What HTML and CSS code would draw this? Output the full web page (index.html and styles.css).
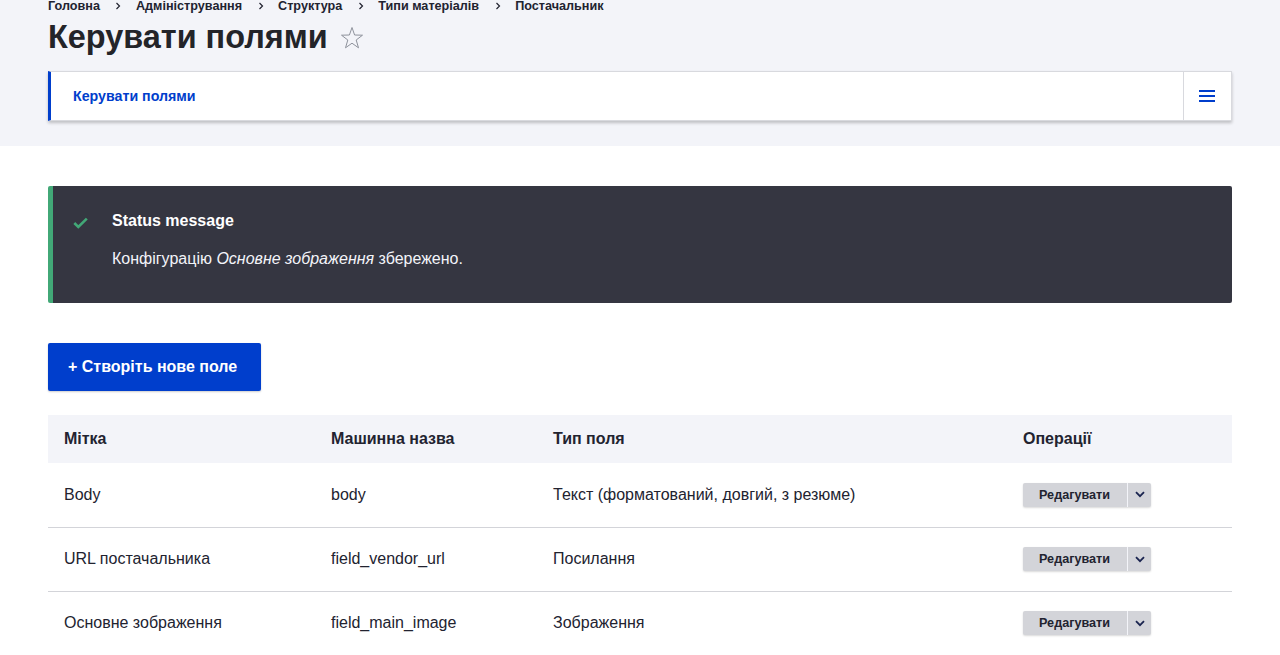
FILE: index.html
```html
<!DOCTYPE html>
<html lang="uk">
<head>
<meta charset="utf-8">
<title>Керувати полями</title>
<link rel="stylesheet" href="styles.css">
</head>
<body>
<header class="page-header">
  <nav class="breadcrumb">
    <a href="#">Головна</a><span class="sep"><svg width="6" height="8" viewBox="0 0 6 8"><path d="M1.5 1l3 3-3 3" fill="none" stroke="#222330" stroke-width="1.2"/></svg></span>
    <a href="#">Адміністрування</a><span class="sep"><svg width="6" height="8" viewBox="0 0 6 8"><path d="M1.5 1l3 3-3 3" fill="none" stroke="#222330" stroke-width="1.2"/></svg></span>
    <a href="#">Структура</a><span class="sep"><svg width="6" height="8" viewBox="0 0 6 8"><path d="M1.5 1l3 3-3 3" fill="none" stroke="#222330" stroke-width="1.2"/></svg></span>
    <a href="#">Типи матеріалів</a><span class="sep"><svg width="6" height="8" viewBox="0 0 6 8"><path d="M1.5 1l3 3-3 3" fill="none" stroke="#222330" stroke-width="1.2"/></svg></span>
    <a href="#">Постачальник</a>
  </nav>
  <div class="title-row">
    <h1 class="title">Керувати полями</h1>
    <svg class="star" width="24" height="24" viewBox="0 0 24 24"><polygon points="12,1.5 14.6,9 22.5,9.2 16.2,14 18.5,21.8 12,17.2 5.5,21.8 7.8,14 1.5,9.2 9.4,9" fill="none" stroke="#8e929c" stroke-width="1"/></svg>
  </div>
  <div class="tabs">
    <a class="tab" href="#">Керувати полями</a>
    <button class="tabs-toggle" type="button" aria-label="Меню">
      <svg width="16" height="12" viewBox="0 0 16 12"><rect x="0" y="0" width="16" height="2" fill="#003ecc"/><rect x="0" y="5" width="16" height="2" fill="#003ecc"/><rect x="0" y="10" width="16" height="2" fill="#003ecc"/></svg>
    </button>
  </div>
</header>

<main class="content">
  <div class="status">
    <div class="status-icon">
      <svg width="15" height="12" viewBox="0 0 15 12"><path d="M1.3 6l4 4L13.8 1.6" fill="none" stroke="#42a877" stroke-width="2.6"/></svg>
    </div>
    <div class="status-body">
      <h2 class="status-title">Status message</h2>
      <p class="status-text">Конфігурацію <em>Основне зображення</em> збережено.</p>
    </div>
  </div>

  <a class="primary-btn" href="#">+ Створіть нове поле</a>

  <table class="fields">
    <colgroup>
      <col class="c1"><col class="c2"><col class="c3"><col class="c4">
    </colgroup>
    <thead>
      <tr><th>Мітка</th><th>Машинна назва</th><th>Тип поля</th><th>Операції</th></tr>
    </thead>
    <tbody>
      <tr>
        <td>Body</td><td>body</td><td>Текст (форматований, довгий, з резюме)</td>
        <td><div class="dropbutton"><a class="db-main" href="#">Редагувати</a><span class="db-toggle"><svg width="10" height="7" viewBox="0 0 10 7"><path d="M1 1.2l4 4 4-4" fill="none" stroke="#1b2550" stroke-width="1.8"/></svg></span></div></td>
      </tr>
      <tr>
        <td>URL постачальника</td><td>field_vendor_url</td><td>Посилання</td>
        <td><div class="dropbutton"><a class="db-main" href="#">Редагувати</a><span class="db-toggle"><svg width="10" height="7" viewBox="0 0 10 7"><path d="M1 1.2l4 4 4-4" fill="none" stroke="#1b2550" stroke-width="1.8"/></svg></span></div></td>
      </tr>
      <tr>
        <td>Основне зображення</td><td>field_main_image</td><td>Зображення</td>
        <td><div class="dropbutton"><a class="db-main" href="#">Редагувати</a><span class="db-toggle"><svg width="10" height="7" viewBox="0 0 10 7"><path d="M1 1.2l4 4 4-4" fill="none" stroke="#1b2550" stroke-width="1.8"/></svg></span></div></td>
      </tr>
    </tbody>
  </table>
</main>
</body>
</html>
```

FILE: styles.css
```css
* { box-sizing: border-box; }
html, body { margin: 0; padding: 0; }
body {
  font-family: "Liberation Sans", Arial, sans-serif;
  color: #222330;
  background: #fff;
  font-size: 16px;
}
a { text-decoration: none; }

.page-header {
  background: #f3f4f9;
  padding: 0 48px 25px;
}
.breadcrumb {
  display: flex;
  align-items: center;
  font-size: 12.64px;
  font-weight: bold;
  line-height: 12px;
  height: 12px;
}
.breadcrumb a { color: #222330; }
.breadcrumb .sep {
  display: inline-flex;
  width: 36px;
  justify-content: center;
  align-items: center;
  padding-left: 1px;
}
.title-row {
  display: flex;
  align-items: center;
  margin-top: 5px;
  height: 40px;
}
.title {
  margin: 0;
  font-size: 32.43px;
  line-height: 40px;
  font-weight: bold;
  color: #232429;
}
.star { margin-left: 12px; margin-top: 1px; }

.tabs {
  margin-top: 14px;
  display: flex;
  height: 50px;
  background: #fff;
  border: 1px solid #d8d9de;
  border-left: 3px solid #003ecc;
  box-shadow: 0 2px 3px rgba(0, 0, 0, 0.22);
}
.tab {
  flex: 1;
  display: flex;
  align-items: center;
  padding-left: 22px;
  font-size: 14.22px;
  font-weight: bold;
  color: #003ecc;
}
.tabs-toggle {
  width: 48px;
  border: 0;
  border-left: 1px solid #d8d9de;
  background: #fff;
  display: flex;
  align-items: center;
  justify-content: center;
  padding: 0 1px 0 0;
}

.content { padding: 40px 48px 0; }

.status {
  display: flex;
  background: #353641;
  border-left: 5px solid #42a877;
  border-radius: 2px;
  min-height: 117px;
  padding: 25px 20px 0 20px;
}
.status-icon {
  width: 39px;
  flex: none;
  padding-top: 4px;
}
.status-body { color: #fff; }
.status-title {
  margin: 0;
  font-size: 16px;
  line-height: 20px;
  font-weight: bold;
}
.status-text {
  margin: 16px 0 0;
  font-size: 16px;
  line-height: 24px;
  color: #f3f4f9;
}

.primary-btn {
  display: inline-flex;
  align-items: center;
  height: 48px;
  margin-top: 40px;
  padding: 0 24px 0 20px;
  background: #003ecc;
  color: #fff;
  font-weight: bold;
  font-size: 16px;
  border-radius: 2px;
  box-shadow: 0 1px 2px rgba(0, 0, 0, 0.2);
}

.fields {
  margin-top: 24px;
  width: 100%;
  border-collapse: collapse;
  table-layout: fixed;
}
.c1 { width: 267px; }
.c2 { width: 222px; }
.c3 { width: 470px; }
.c4 { width: 225px; }
.fields th {
  background: #f3f4f9;
  height: 48px;
  padding: 0 16px;
  text-align: left;
  font-weight: bold;
  font-size: 16px;
}
.fields td {
  height: 64px;
  padding: 0 16px;
  border-bottom: 1px solid #d3d4d9;
  font-size: 16px;
  vertical-align: middle;
}

.dropbutton {
  display: inline-flex;
  height: 24px;
  background: #d3d4d9;
  border-radius: 2px;
  box-shadow: 0 1px 2px rgba(0, 0, 0, 0.15);
}
.db-main {
  display: flex;
  align-items: center;
  padding: 0 17px 0 16px;
  font-size: 12.64px;
  font-weight: bold;
  color: #222330;
  border-right: 1px solid #f3f4f9;
}
.db-toggle {
  width: 23px;
  display: flex;
  align-items: center;
  justify-content: center;
}
```
